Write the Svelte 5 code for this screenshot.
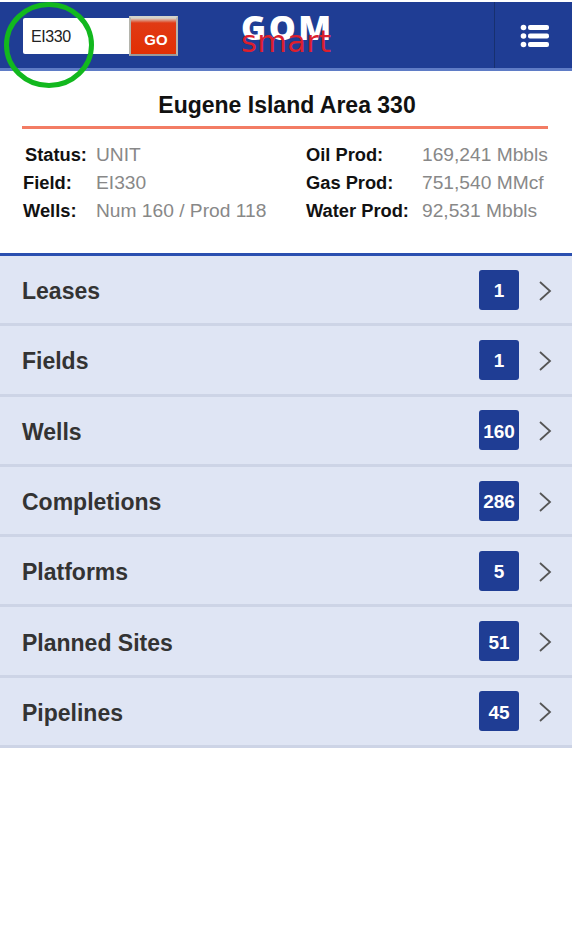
<script>
  // Area summary page: search header, stats block, and list of related counts
  const leftStats = [
    { label: 'Status:', value: 'UNIT', indent: true },
    { label: 'Field:', value: 'EI330' },
    { label: 'Wells:', value: 'Num 160 / Prod 118' }
  ];
  const rightStats = [
    { label: 'Oil Prod:', value: '169,241 Mbbls' },
    { label: 'Gas Prod:', value: '751,540 MMcf' },
    { label: 'Water Prod:', value: '92,531 Mbbls' }
  ];
  const rows = [
    { name: 'Leases', count: 1 },
    { name: 'Fields', count: 1 },
    { name: 'Wells', count: 160 },
    { name: 'Completions', count: 286 },
    { name: 'Platforms', count: 5 },
    { name: 'Planned Sites', count: 51 },
    { name: 'Pipelines', count: 45 }
  ];
</script>

<div class="page">
  <header class="top">
    <div class="search">
      <input class="search-input" value="EI330" aria-label="Search" />
      <button class="go">GO</button>
    </div>
    <div class="logo">
      <span class="logo-gom">GOM</span>
      <span class="logo-smart">smart</span>
    </div>
    <button class="menu" aria-label="Menu">
      <svg width="30" height="26" viewBox="0 0 30 26" fill="#fff">
        <circle cx="3.5" cy="4.5" r="2.8" />
        <rect x="8" y="2" width="21" height="5" rx="2" />
        <circle cx="3.5" cy="13" r="2.8" />
        <rect x="8" y="10.5" width="21" height="5" rx="2" />
        <circle cx="3.5" cy="21.5" r="2.8" />
        <rect x="8" y="19" width="21" height="5" rx="2" />
      </svg>
    </button>
  </header>

  <section class="summary">
    <h1 class="title">Eugene Island Area 330</h1>
    <div class="stats">
      <dl class="col col-left">
        {#each leftStats as s}
          <dt class:indent={s.indent}>{s.label}</dt>
          <dd>{s.value}</dd>
        {/each}
      </dl>
      <dl class="col col-right">
        {#each rightStats as s}
          <dt>{s.label}</dt>
          <dd>{s.value}</dd>
        {/each}
      </dl>
    </div>
  </section>

  <ul class="list">
    {#each rows as r}
      <li class="row">
        <span class="row-name">{r.name}</span>
        <span class="badge">{r.count}</span>
        <svg class="chev" width="14" height="22" viewBox="0 0 14 22" fill="none" stroke="#555" stroke-width="1.8">
          <path d="M2 2 L12 11 L2 20" />
        </svg>
      </li>
    {/each}
  </ul>

  <!-- annotation ring drawn over the screenshot -->
  <svg class="ring" width="92" height="88" viewBox="0 0 92 88" fill="none" stroke="#12b81e" stroke-width="5">
    <ellipse cx="46" cy="44" rx="42.5" ry="40.5" />
  </svg>
</div>

<style>
  :global(body) { margin: 0; background: #fff; }

  .page {
    position: relative; width: 572px; min-height: 941px; overflow: hidden;
    padding-top: 2px; box-sizing: border-box; background: #fff;
    font-family: "Liberation Sans", Arial, sans-serif;
  }

  .top {
    display: flex; align-items: stretch; height: 66px;
    background: #1f3d94; border-bottom: 3px solid #5f7cc6;
  }
  .search { display: flex; align-items: flex-start; width: 210px; padding: 16px 0 0 23px; box-sizing: border-box; }
  .search-input {
    width: 106px; height: 36px; padding: 2px 0 0 8px; box-sizing: border-box; border: none; border-radius: 2px 0 0 2px;
    background: #fff; color: #222; font-family: inherit; font-size: 16px; letter-spacing: -0.4px; outline: none;
  }
  .go {
    width: 49px; height: 40px; margin-top: -2px; padding: 6px 0 0 5px; box-sizing: border-box;
    border: 2px solid #b4b4ac; border-top-color: #d4d4cc; border-bottom-color: #999;
    background: linear-gradient(#d8d8cf 0, #e03a14 5px, #e22f04 100%);
    color: #fff; font-family: inherit; font-size: 15px; font-weight: 700;
  }

  .logo { position: relative; width: 120px; margin-left: 30px; }
  .logo-gom {
    position: absolute; left: 1px; top: 5px; color: #fff; font-family: "Open Sans", sans-serif;
    font-size: 34px; font-weight: 800; line-height: 40px; letter-spacing: 2.5px;
  }
  .logo-smart {
    position: absolute; left: 1px; top: 23px; color: #dc1f2e; font-family: "DejaVu Sans", sans-serif;
    font-size: 30.5px; line-height: 34px; letter-spacing: 0.3px;
  }

  .menu {
    display: flex; align-items: center; justify-content: center; margin-left: auto; width: 78px; padding: 2px 0 0 3px;
    border: none; border-left: 1px solid #17306f; background: none;
  }

  .summary { height: 185px; box-sizing: border-box; padding: 22px 24px 0 22px; border-bottom: 3px solid #2a4fb0; }
  .title {
    margin: 0; height: 33px; padding-left: 4px; border-bottom: 3px solid #f37c64; text-align: center;
    color: #111; font-size: 23px; font-weight: 700; line-height: 24px;
  }
  .stats { display: flex; padding-top: 12px; font-size: 19.2px; line-height: 28px; }
  .col { display: grid; margin: 0; }
  .col-left { grid-template-columns: 73px 1fr; width: 284px; padding-left: 1px; box-sizing: border-box; }
  .col-right { grid-template-columns: 116px 1fr; margin-left: 0; }
  dt { color: #111; font-weight: 700; white-space: nowrap; font-size: 18.3px; }
  dt.indent { padding-left: 2px; }
  dd { margin: 0; color: #888; white-space: nowrap; }

  .list { margin: 0; padding: 0; list-style: none; }
  .row {
    display: flex; align-items: center; height: 70.3px; box-sizing: border-box;
    padding: 0 20px 0 22px; background: #dfe5f4; border-bottom: 3px solid #cdd4e6;
  }
  .row-name { flex: 1; margin-top: 4px; color: #333; font-size: 23px; font-weight: 700; }
  .badge {
    display: flex; align-items: center; justify-content: center; width: 40px; height: 40px; padding-top: 3px; box-sizing: border-box;
    border-radius: 3px; background: #1f3d94; color: #fff; font-size: 19px; font-weight: 700;
  }
  .chev { margin-left: 19px; margin-top: 2px; }

  .ring { position: absolute; left: 3px; top: 1px; }
</style>
